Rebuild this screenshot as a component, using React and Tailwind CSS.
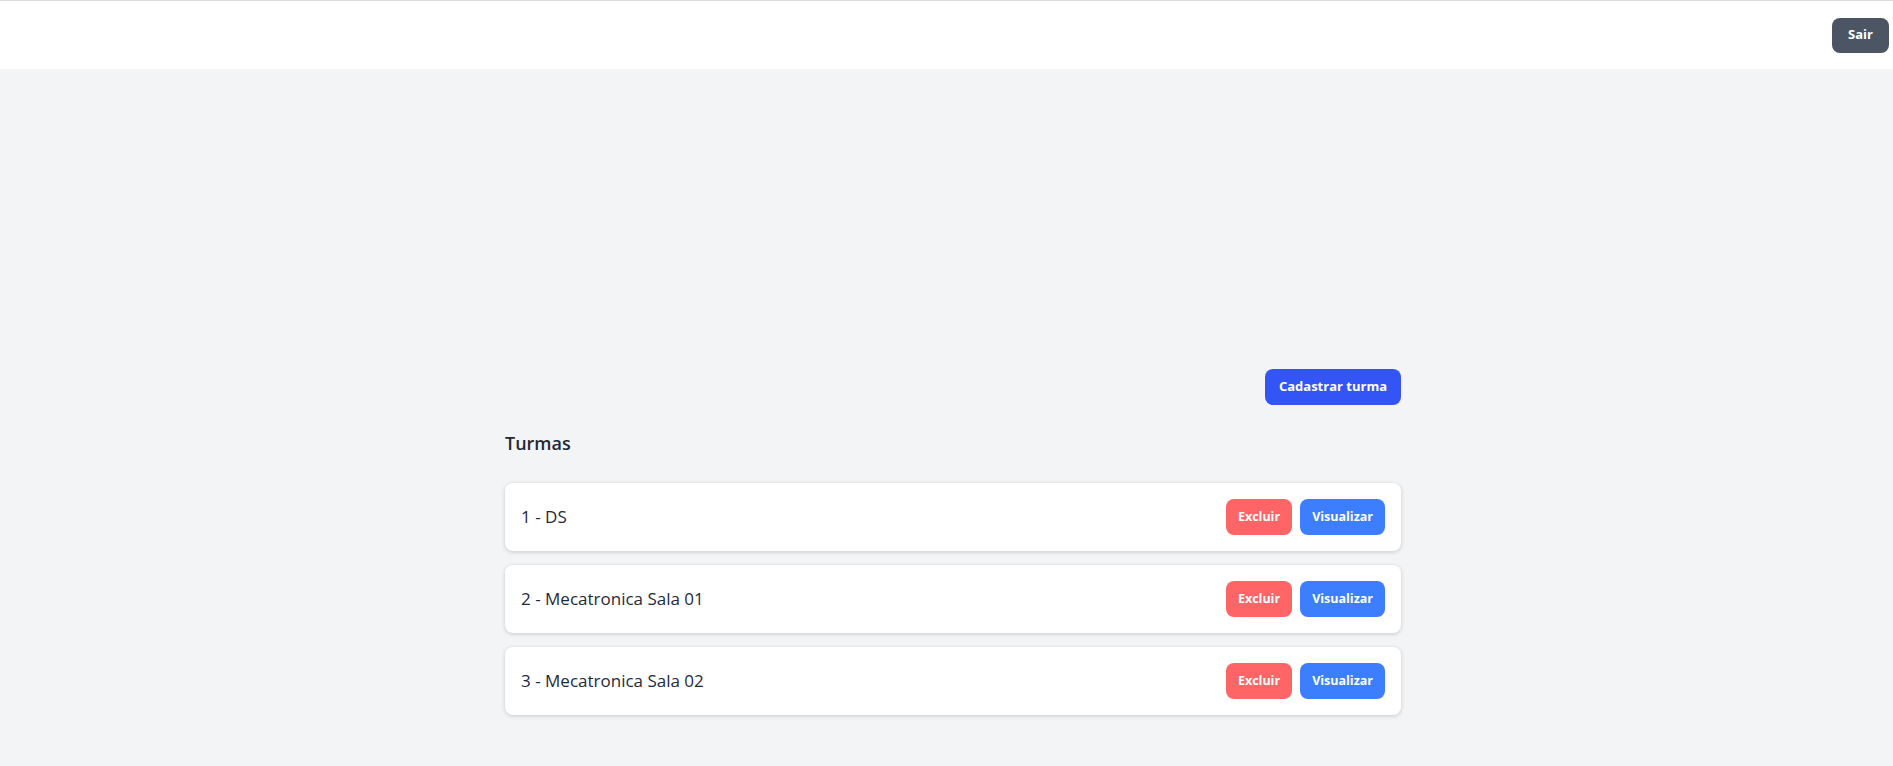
const TURMAS = [
  { id: 1, nome: 'DS' },
  { id: 2, nome: 'Mecatronica Sala 01' },
  { id: 3, nome: 'Mecatronica Sala 02' },
]

export default function App() {
  return (
    <div
      className="min-h-screen bg-[#f3f4f6] text-[#1e293b]"
      style={{ fontFamily: '"Segoe UI", "Open Sans", "Noto Sans", sans-serif' }}
    >
      {/* header */}
      <header className="h-[69px] bg-white border-t border-[#dcdcdc] flex items-center justify-end pr-1">
        <button className="h-[35px] px-4 rounded-lg bg-[#4b5563] text-white text-[13px] font-bold">
          Sair
        </button>
      </header>

      <main className="flex justify-center pl-[13px] pt-[300px] pb-10">
        <div className="w-[896px]">
          <div className="flex justify-end">
            <button className="h-9 px-[14px] rounded-lg bg-[#3355f6] text-white text-[13px] font-bold">
              Cadastrar turma
            </button>
          </div>

          <h2 className="mt-6 text-lg font-semibold text-[#1f2937]">Turmas</h2>

          <div className="mt-[26px] flex flex-col gap-3.5">
            {TURMAS.map((t) => (
              <div
                key={t.id}
                className="flex items-center justify-between bg-white rounded-lg p-4 shadow-[0_1px_4px_rgba(0,0,0,0.18)]"
              >
                <span className="text-[17px] text-[#1e293b]">
                  {t.id} - {t.nome}
                </span>
                <div className="flex gap-2">
                  <button className="h-9 px-3 rounded-lg bg-[#ff6467] text-white text-[12.5px] font-bold">
                    Excluir
                  </button>
                  <button className="h-9 px-3 rounded-lg bg-[#3d7eff] text-white text-[12.5px] font-bold">
                    Visualizar
                  </button>
                </div>
              </div>
            ))}
          </div>
        </div>
      </main>
    </div>
  )
}
